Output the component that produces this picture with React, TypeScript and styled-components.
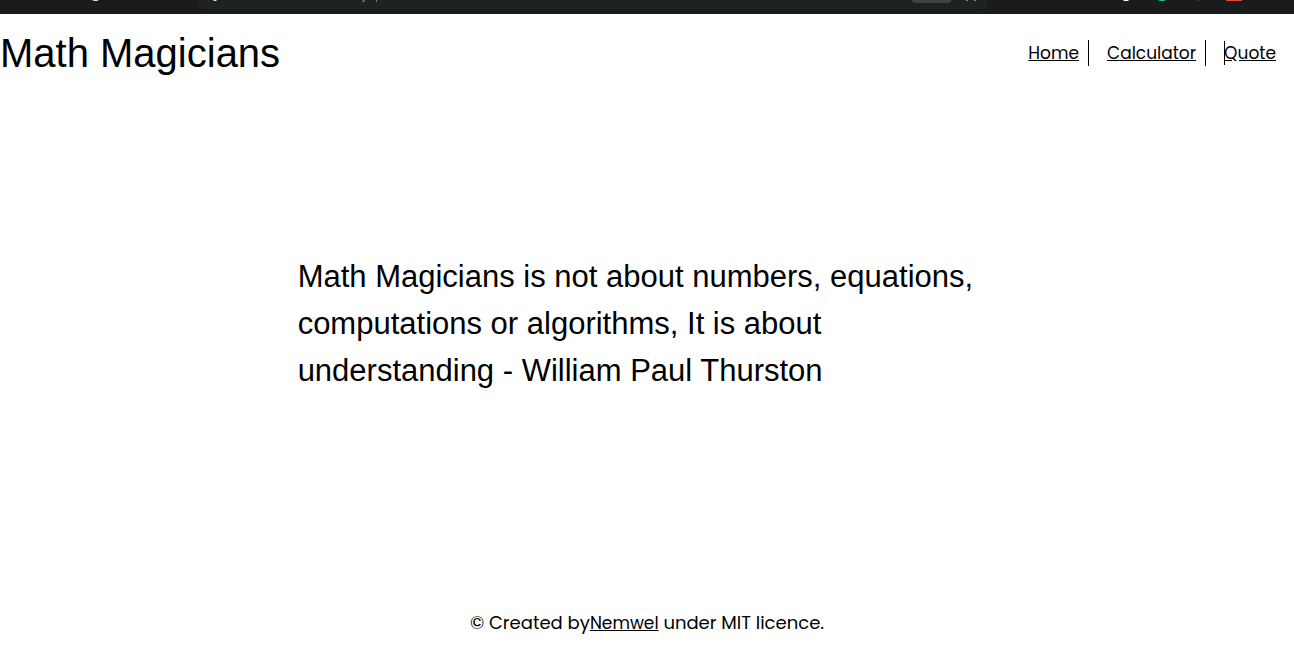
import React from 'react';
import styled, { createGlobalStyle } from 'styled-components';

const GlobalStyle = createGlobalStyle`
  *, *::before, *::after { box-sizing: border-box; }
  body {
    margin: 0;
    background: #fff;
    color: #000;
    font-family: "Liberation Sans", Arial, sans-serif;
  }
`;

const textFont = 'Poppins, Inter, sans-serif';

const Page = styled.div`
  display: flex;
  flex-direction: column;
  min-height: 100vh;
`;

const BrowserEdge = styled.div`
  display: flex;
  align-items: flex-start;
  height: 14px;
  background: #1a1b1d;
`;

const TabSide = styled.div`
  width: 198px;
  height: 9px;
`;

const AddressBar = styled.div`
  display: flex;
  justify-content: space-between;
  flex: 1;
  height: 9px;
  border-radius: 0 0 4px 4px;
  background: #1e2223;
`;

const AddressTools = styled.div`
  display: flex;
  gap: 15px;
  padding-right: 7px;
`;

const Chip = styled.div`
  width: 39px;
  height: 3px;
  border-radius: 0 0 3px 3px;
  background: #404344;
`;

const ExtensionSide = styled.div`
  width: 307px;
  height: 9px;
`;

const Marks = styled.svg`
  display: block;
`;

const Header = styled.header`
  display: flex;
  align-items: center;
  justify-content: space-between;
  height: 78px;
  padding-right: 18px;
`;

const Title = styled.h1`
  margin: 0;
  font-size: 40px;
  font-weight: 400;
  line-height: 48px;
`;

const NavList = styled.ul`
  display: flex;
  gap: 18px;
  margin: 0;
  padding: 0;
  list-style: none;
`;

const NavItem = styled.li<{ $divided?: boolean }>`
  position: relative;
  padding-right: ${({ $divided }) => ($divided ? '9px' : '0')};
  border-right: ${({ $divided }) => ($divided ? '1px solid #000' : '0')};
  font-family: ${textFont};
  font-size: 18px;
  line-height: 26px;
`;

const TextLink = styled.a`
  color: #000;
  font-size: 17px;
  text-decoration: underline;
`;

const Caret = styled.span`
  position: absolute;
  top: 1px;
  left: 0;
  width: 1px;
  height: 24px;
  background: #000;
`;

const Main = styled.main`
  display: flex;
  flex: 1;
  align-items: center;
  justify-content: center;
`;

const Quote = styled.p`
  width: 54%;
  margin: 0;
  font-size: 31px;
  line-height: 47px;
`;

const Footer = styled.footer`
  padding: 56px 0 32px;
  font-family: ${textFont};
  font-size: 18px;
  line-height: 26px;
  text-align: center;
`;

export default function App() {
  return (
    <Page>
      <GlobalStyle />
      <BrowserEdge aria-hidden="true">
        <TabSide>
          <Marks width="198" height="3">
            <path d="M92 0h7l-2 1h-3z" fill="#ddd" />
          </Marks>
        </TabSide>
        <AddressBar>
          <Marks width="200" height="3">
            <path d="M15 0h4l-1 1h-2z" fill="#ddd" />
            <path d="M165 0h2l-1 2h-2v-1h1zM178 0h1v2h-1z" fill="#777b80" />
          </Marks>
          <AddressTools>
            <Chip />
            <Marks width="14" height="3">
              <path d="M0 0h2v1h-2zM8 0h2v1h-2z" fill="#85888a" />
            </Marks>
          </AddressTools>
        </AddressBar>
        <ExtensionSide>
          <Marks width="307" height="3">
            <path d="M136 0h6l-1 1h-4z" fill="#f2f2f2" />
            <path d="M171 0h8l-2 1h-4z" fill="#15c39a" />
            <path d="M209 0h4v1h-4z" fill="#3b2a25" />
            <path d="M239 0h16v1h-16z" fill="#dd4b39" />
          </Marks>
        </ExtensionSide>
      </BrowserEdge>
      <Header>
        <Title>Math Magicians</Title>
        <nav>
          <NavList>
            <NavItem $divided><TextLink href="#home">Home</TextLink></NavItem>
            <NavItem $divided><TextLink href="#calculator">Calculator</TextLink></NavItem>
            <NavItem><Caret /><TextLink href="#quote">Quote</TextLink></NavItem>
          </NavList>
        </nav>
      </Header>
      <Main>
        <Quote>
          Math Magicians is not about numbers, equations, computations or
          algorithms, It is about understanding - William Paul Thurston
        </Quote>
      </Main>
      <Footer>
        © Created by<TextLink href="#nemwel">Nemwel</TextLink> under MIT licence.
      </Footer>
    </Page>
  );
}
